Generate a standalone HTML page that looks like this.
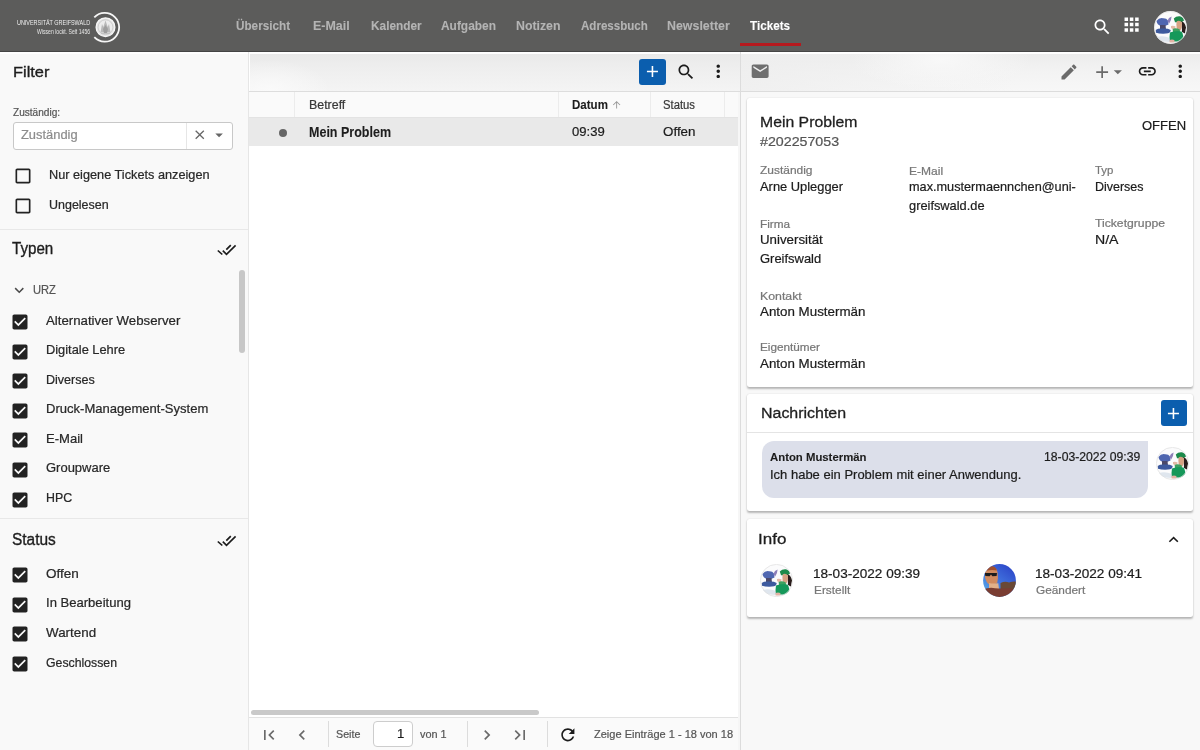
<!DOCTYPE html>
<html><head><meta charset="utf-8">
<style>
*{box-sizing:border-box;margin:0;padding:0}
html,body{width:1200px;height:750px;overflow:hidden;background:#f7f7f7;font-family:"Liberation Sans",sans-serif}
.a{position:absolute}
.t{position:absolute;white-space:nowrap}
</style></head><body>
<svg width="0" height="0" style="position:absolute"><defs><filter id="blr" x="-10%" y="-10%" width="120%" height="120%"><feGaussianBlur stdDeviation="0.45"/></filter><clipPath id="cav"><circle cx="16.5" cy="16.5" r="16.4"/></clipPath>
<linearGradient id="sky" x1="0.8" y1="0" x2="0.1" y2="0.9"><stop offset="0" stop-color="#2c45c8"/><stop offset="0.5" stop-color="#3f6fdc"/><stop offset="1" stop-color="#58a8e6"/></linearGradient></defs></svg>
<div class="a" style="left:0px;top:0px;width:1200px;height:51px;background:#5c5c5b;"></div>
<div class="a" style="left:0px;top:51px;width:1200px;height:1px;background:#454545;"></div>
<div class="a" style="left:0px;top:52px;width:248px;height:698px;background:#f9f9f9;"></div>
<div class="a" style="left:248px;top:52px;width:2px;height:698px;background:#e6e6e6;"></div>
<div class="a" style="left:249px;top:52px;width:491px;height:698px;background:#ffffff;"></div>
<div class="a" style="left:740px;top:52px;width:1px;height:698px;background:#dcdcdc;"></div>
<div class="a" style="left:741px;top:52px;width:459px;height:698px;background:#f8f8f8;"></div>
<svg class="a" style="left:90px;top:10px" width="35" height="35" viewBox="0 0 35 35"><path d="M4.3 7.4 A14.4 14.4 0 1 1 4.3 27.2" fill="none" stroke="#f6f6f6" stroke-width="1.8"/><circle cx="15.5" cy="17.2" r="9.4" fill="#e6e6e6" stroke="#f7f7f7" stroke-width="1.3"/><circle cx="15.5" cy="17.2" r="7.4" fill="#ececec" stroke="#bcbcbc" stroke-width="0.6"/><path d="M10.5 22.5 L12 14 L13.3 17 L15.5 10.5 L17.7 17 L19 14 L20.5 22.5Z" fill="#b9b9b9"/><path d="M13 19 L15.5 15 L18 19 L17 23 L14 23Z" fill="#9e9e9e"/><path d="M11 23.5 H20" stroke="#c2c2c2" stroke-width="1"/></svg>
<div class="a" style="left:740px;top:43px;width:61px;height:3px;background:#b5191e;"></div>
<svg class="a" style="left:1091.5px;top:17.2px" width="20.3" height="20.3" viewBox="0 0 24 24"><path d="M15.5 14h-.79l-.28-.27C15.41 12.590 16 11.11 16 9.5 16 5.91 13.09 3 9.5 3S3 5.91 3 9.5 5.91 16 9.5 16c1.61 0 3.09-.59 4.23-1.57l.27.28v.79l5 4.99L20.49 19l-4.99-5zm-6 0C7.01 14 5 11.99 5 9.5S7.01 5 9.5 5 14 7.01 14 9.5 11.99 14 9.5 14z" fill="#ffffff"/></svg>
<svg class="a" style="left:1120.5px;top:14.2px" width="21.2" height="21.2" viewBox="0 0 24 24"><path d="M4 8h4V4H4v4zm6 12h4v-4h-4v4zm-6 0h4v-4H4v4zm0-6h4v-4H4v4zm6 0h4v-4h-4v4zm6-10v4h4V4h-4zm-6 4h4V4h-4v4zm6 6h4v-4h-4v4zm0 6h4v-4h-4v4z" fill="#ffffff"/></svg>
<div class="a" style="left:1154px;top:11px;width:33px;height:33px"><svg width="33" height="33" viewBox="0 0 33 33"><g clip-path="url(#cav)"><rect width="33" height="33" fill="#fbfbfc"/><g filter="url(#blr)">
<path d="M3 26 Q9 24 16 27 L16 31 Q9 31 3 29Z" fill="#dfe6ee"/>
<path d="M2.5 10 Q5 6.5 9 7.2 Q12.5 7 14 9.5 L14.5 13.5 Q11 15.5 7 15 Q3 14 2.5 10Z" fill="#4f66b0"/>
<path d="M13.3 10 Q14.5 6.5 17.6 5.6 Q17.4 9.5 15.2 12.6Z" fill="#8d7fb8"/>
<path d="M6 14 L11.5 14 L12 18.5 L6 18.5Z" fill="#4b4a6a"/>
<path d="M1.7 19 Q4 17.2 9 17.6 Q14 17.4 16.7 19 Q16.5 22.6 12 22.6 Q6 23 2 21.8Z" fill="#3c5a9e"/>
<path d="M19.8 7.5 Q22 4.8 26 5.2 Q29.5 6.2 30 9.5 L27 11.5 L21 11.2Z" fill="#1f8a4c"/>
<path d="M27.5 10 Q31.5 12 32 16.5 L31 22.5 L28 21Z" fill="#2a1f1a"/>
<path d="M22.8 10.2 Q26 9 28 11.5 Q28.4 16.5 26.5 19.5 Q24 20 22.6 17 Q22 13 22.8 10.2Z" fill="#d7a283"/>
<path d="M17 15 Q19.5 14.2 21.6 15.6 L21 18.3 Q18.5 18.6 17 17Z" fill="#e3b9a6"/>
<path d="M18.6 18 Q22 16.2 25.8 18.6 L26 21 L19 21Z" fill="#3da05e"/>
<path d="M16 21.5 Q21 19.5 27.5 20.5 Q30 24 29 30.5 L16 30.5 Q15 26 16 21.5Z" fill="#12985a"/>
<path d="M15.6 29 Q18 28.2 20.4 29 L20.4 31.5 L15.6 31.5Z" fill="#e2b2a4"/>
</g></g><circle cx="16.5" cy="16.5" r="16.1" fill="none" stroke="#e0e0e0" stroke-width="0.7"/></svg></div>
<div class="a" style="left:13px;top:122px;width:220px;height:28px;background:#fff;border:1px solid #c8c8c8;border-radius:3px"></div>
<div class="a" style="left:186px;top:123px;width:1px;height:26px;background:#e6e6e6;"></div>
<svg class="a" style="left:191.85px;top:127.25px" width="15.5" height="15.5" viewBox="0 0 24 24"><path d="M19 6.41L17.590 5 12 10.59 6.41 5 5 6.41 10.59 12 5 17.59 6.41 19 12 13.410 17.59 19 19 17.59 13.41 12z" fill="#666"/></svg>
<svg class="a" style="left:210.3px;top:126.4px" width="18.2" height="18.2" viewBox="0 0 24 24"><path d="M7 10l5 5 5-5z" fill="#666"/></svg>
<svg class="a" style="left:12.7px;top:165.9px" width="20" height="20" viewBox="0 0 24 24"><path d="M19 5v14H5V5h14m0-2H5c-1.1 0-2 .9-2 2v14c0 1.1.9 2 2 2h14c1.1 0 2-.9 2-2V5c0-1.1-.9-2-2-2z" fill="#222"/></svg>
<svg class="a" style="left:12.7px;top:195.8px" width="20" height="20" viewBox="0 0 24 24"><path d="M19 5v14H5V5h14m0-2H5c-1.1 0-2 .9-2 2v14c0 1.1.9 2 2 2h14c1.1 0 2-.9 2-2V5c0-1.1-.9-2-2-2z" fill="#222"/></svg>
<div class="a" style="left:0px;top:229px;width:248px;height:1px;background:#e8e8e8;"></div>
<svg class="a" style="left:217px;top:244px" width="20" height="12" viewBox="0 0 20 12"><path d="M0.8 6.5 L5.3 10.5 M5.8 6.6 L9.5 10.3 L18.6 1.4 M9.3 5.7 L13.8 1.2" fill="none" stroke="#1c1c1c" stroke-width="1.65"/></svg>
<div class="a" style="left:239px;top:270px;width:6px;height:83px;background:#c7c7c7;border-radius:3px"></div>
<svg class="a" style="left:10.4px;top:280.9px" width="18.5" height="18.5" viewBox="0 0 24 24"><path d="M16.59 8.59L12 13.17 7.41 8.59 6 10l6 6 6-6z" fill="#4a4a4a"/></svg>
<svg class="a" style="left:9.7px;top:312.0px" width="20" height="20" viewBox="0 0 24 24"><path d="M19 3H5c-1.11 0-2 .9-2 2v14c0 1.1.89 2 2 2h14c1.11 0 2-.9 2-2V5c0-1.1-.89-2-2-2zm-9 14l-5-5 1.41-1.41L10 14.17l7.59-7.590L19 8l-9 9z" fill="#222"/></svg>
<svg class="a" style="left:9.7px;top:341.6px" width="20" height="20" viewBox="0 0 24 24"><path d="M19 3H5c-1.11 0-2 .9-2 2v14c0 1.1.89 2 2 2h14c1.11 0 2-.9 2-2V5c0-1.1-.89-2-2-2zm-9 14l-5-5 1.41-1.41L10 14.17l7.59-7.590L19 8l-9 9z" fill="#222"/></svg>
<svg class="a" style="left:9.7px;top:371.2px" width="20" height="20" viewBox="0 0 24 24"><path d="M19 3H5c-1.11 0-2 .9-2 2v14c0 1.1.89 2 2 2h14c1.11 0 2-.9 2-2V5c0-1.1-.89-2-2-2zm-9 14l-5-5 1.41-1.41L10 14.17l7.59-7.590L19 8l-9 9z" fill="#222"/></svg>
<svg class="a" style="left:9.7px;top:400.8px" width="20" height="20" viewBox="0 0 24 24"><path d="M19 3H5c-1.11 0-2 .9-2 2v14c0 1.1.89 2 2 2h14c1.11 0 2-.9 2-2V5c0-1.1-.89-2-2-2zm-9 14l-5-5 1.41-1.41L10 14.17l7.59-7.590L19 8l-9 9z" fill="#222"/></svg>
<svg class="a" style="left:9.7px;top:430.4px" width="20" height="20" viewBox="0 0 24 24"><path d="M19 3H5c-1.11 0-2 .9-2 2v14c0 1.1.89 2 2 2h14c1.11 0 2-.9 2-2V5c0-1.1-.89-2-2-2zm-9 14l-5-5 1.41-1.41L10 14.17l7.59-7.590L19 8l-9 9z" fill="#222"/></svg>
<svg class="a" style="left:9.7px;top:460.0px" width="20" height="20" viewBox="0 0 24 24"><path d="M19 3H5c-1.11 0-2 .9-2 2v14c0 1.1.89 2 2 2h14c1.11 0 2-.9 2-2V5c0-1.1-.89-2-2-2zm-9 14l-5-5 1.41-1.41L10 14.17l7.59-7.590L19 8l-9 9z" fill="#222"/></svg>
<svg class="a" style="left:9.7px;top:489.6px" width="20" height="20" viewBox="0 0 24 24"><path d="M19 3H5c-1.11 0-2 .9-2 2v14c0 1.1.89 2 2 2h14c1.11 0 2-.9 2-2V5c0-1.1-.89-2-2-2zm-9 14l-5-5 1.41-1.41L10 14.17l7.59-7.590L19 8l-9 9z" fill="#222"/></svg>
<div class="a" style="left:0px;top:518px;width:248px;height:1px;background:#e8e8e8;"></div>
<svg class="a" style="left:217px;top:535px" width="20" height="12" viewBox="0 0 20 12"><path d="M0.8 6.5 L5.3 10.5 M5.8 6.6 L9.5 10.3 L18.6 1.4 M9.3 5.7 L13.8 1.2" fill="none" stroke="#1c1c1c" stroke-width="1.65"/></svg>
<svg class="a" style="left:9.7px;top:564.9px" width="20" height="20" viewBox="0 0 24 24"><path d="M19 3H5c-1.11 0-2 .9-2 2v14c0 1.1.89 2 2 2h14c1.11 0 2-.9 2-2V5c0-1.1-.89-2-2-2zm-9 14l-5-5 1.41-1.41L10 14.17l7.59-7.590L19 8l-9 9z" fill="#222"/></svg>
<svg class="a" style="left:9.7px;top:594.6px" width="20" height="20" viewBox="0 0 24 24"><path d="M19 3H5c-1.11 0-2 .9-2 2v14c0 1.1.89 2 2 2h14c1.11 0 2-.9 2-2V5c0-1.1-.89-2-2-2zm-9 14l-5-5 1.41-1.41L10 14.17l7.59-7.590L19 8l-9 9z" fill="#222"/></svg>
<svg class="a" style="left:9.7px;top:624.3px" width="20" height="20" viewBox="0 0 24 24"><path d="M19 3H5c-1.11 0-2 .9-2 2v14c0 1.1.89 2 2 2h14c1.11 0 2-.9 2-2V5c0-1.1-.89-2-2-2zm-9 14l-5-5 1.41-1.41L10 14.17l7.59-7.590L19 8l-9 9z" fill="#222"/></svg>
<svg class="a" style="left:9.7px;top:654.0px" width="20" height="20" viewBox="0 0 24 24"><path d="M19 3H5c-1.11 0-2 .9-2 2v14c0 1.1.89 2 2 2h14c1.11 0 2-.9 2-2V5c0-1.1-.89-2-2-2zm-9 14l-5-5 1.41-1.41L10 14.17l7.59-7.590L19 8l-9 9z" fill="#222"/></svg>
<div class="a" style="left:250px;top:52px;width:490px;height:39px;background:radial-gradient(ellipse 60px 30px at 20px 38px,#fafafa,rgba(250,250,250,0)),linear-gradient(180deg,#e9e9e9 0%,#eeeeee 40%,#f4f4f4 100%)"></div>
<div class="a" style="left:249px;top:91px;width:491px;height:1px;background:#dddddd;"></div>
<div class="a" style="left:639.4px;top:58.9px;width:26.2px;height:26px;background:#0b5eae;border-radius:3px"></div>
<svg class="a" style="left:643.4px;top:62.4px" width="18.9" height="18.9" viewBox="0 0 24 24"><path d="M19 13h-6v6h-2v-6H5v-2h6V5h2v6h6v2z" fill="#ffffff"/></svg>
<svg class="a" style="left:675.5px;top:61.75px" width="20" height="20" viewBox="0 0 24 24"><path d="M15.5 14h-.79l-.28-.27C15.41 12.590 16 11.11 16 9.5 16 5.91 13.09 3 9.5 3S3 5.91 3 9.5 5.91 16 9.5 16c1.61 0 3.09-.59 4.23-1.57l.27.28v.79l5 4.99L20.49 19l-4.99-5zm-6 0C7.01 14 5 11.99 5 9.5S7.01 5 9.5 5 14 7.01 14 9.5 11.99 14 9.5 14z" fill="#1c1c1c"/></svg>
<svg class="a" style="left:707.75px;top:61.3px" width="20.5" height="20.5" viewBox="0 0 24 24"><path d="M12 8c1.1 0 2-.9 2-2s-.9-2-2-2-2 .9-2 2 .9 2 2 2zm0 2c-1.1 0-2 .9-2 2s.9 2 2 2 2-.9 2-2-.9-2-2-2zm0 6c-1.1 0-2 .9-2 2s.9 2 2 2 2-.9 2-2-.9-2-2-2z" fill="#1c1c1c"/></svg>
<div class="a" style="left:249px;top:92px;width:489px;height:25px;background:#fafafa;"></div>
<div class="a" style="left:249px;top:117px;width:489px;height:1px;background:#e3e3e3;"></div>
<div class="a" style="left:294px;top:92px;width:1px;height:25px;background:#ececec;"></div>
<div class="a" style="left:557.5px;top:92px;width:1px;height:25px;background:#ececec;"></div>
<div class="a" style="left:649.5px;top:92px;width:1px;height:25px;background:#ececec;"></div>
<div class="a" style="left:724px;top:92px;width:1px;height:25px;background:#ececec;"></div>
<svg class="a" style="left:611.3px;top:99.4px" width="11.25" height="11.25" viewBox="0 0 24 24"><path d="M4 12l1.41 1.41L11 7.83V20h2V7.830l5.58 5.59L20 12l-8-8-8 8z" fill="#9a9a9a"/></svg>
<div class="a" style="left:249px;top:118px;width:489px;height:27.6px;background:#e9e9e9;"></div>
<div class="a" style="left:278.5px;top:128.6px;width:8.5px;height:8.5px;border-radius:50%;background:#666"></div>
<div class="a" style="left:251px;top:710px;width:288px;height:5px;background:#c9c9c9;border-radius:3px"></div>
<div class="a" style="left:249px;top:717px;width:489px;height:1px;background:#e2e2e2;"></div>
<div class="a" style="left:249px;top:718px;width:489px;height:32px;background:#fafafa;"></div>
<svg class="a" style="left:259.3px;top:724.8px" width="20" height="20" viewBox="0 0 24 24"><path d="M18.41 16.59L13.82 12l4.59-4.59L17 6l-6 6 6 6zM6 6h2v12H6z" fill="#6a6a6a"/></svg>
<svg class="a" style="left:291.5px;top:724.8px" width="20" height="20" viewBox="0 0 24 24"><path d="M15.41 7.41L14 6l-6 6 6 6 1.41-1.41L10.83 12z" fill="#6a6a6a"/></svg>
<div class="a" style="left:328px;top:721px;width:1px;height:26px;background:#dcdcdc;"></div>
<div class="a" style="left:373px;top:721px;width:40px;height:26px;background:#fff;border:1px solid #cdcdcd;border-radius:4px"></div>
<div class="a" style="left:467px;top:721px;width:1px;height:26px;background:#dcdcdc;"></div>
<svg class="a" style="left:477.3px;top:724.8px" width="20" height="20" viewBox="0 0 24 24"><path d="M10 6L8.59 7.41 13.17 12l-4.58 4.59L10 18l6-6z" fill="#6a6a6a"/></svg>
<svg class="a" style="left:510px;top:724.8px" width="20" height="20" viewBox="0 0 24 24"><path d="M5.59 7.41L10.18 12l-4.59 4.59L7 18l6-6-6-6zM16 6h2v12h-2z" fill="#6a6a6a"/></svg>
<div class="a" style="left:547px;top:721px;width:1px;height:26px;background:#dcdcdc;"></div>
<svg class="a" style="left:558px;top:724.7px" width="19.7" height="19.7" viewBox="0 0 24 24"><path d="M17.65 6.35C16.2 4.9 14.21 4 12 4c-4.42 0-7.99 3.58-7.99 8s3.57 8 7.99 8c3.73 0 6.84-2.550 7.73-6h-2.08c-.82 2.33-3.04 4-5.650 4-3.31 0-6-2.69-6-6s2.69-6 6-6c1.66 0 3.14.69 4.22 1.78L13 11h7V4l-2.35 2.35z" fill="#1c1c1c"/></svg>
<div class="a" style="left:738px;top:92px;width:2px;height:658px;background:#f6f6f6;"></div>
<div class="a" style="left:741px;top:52px;width:459px;height:39px;background:radial-gradient(ellipse 90px 30px at 200px 8px,#f8f8f8,rgba(248,248,248,0)),linear-gradient(90deg,rgba(238,238,238,0.8) 0%,rgba(246,246,246,0) 60%),linear-gradient(180deg,#ebebeb 0%,#f3f3f3 50%,#f7f7f7 100%)"></div>
<div class="a" style="left:741px;top:91px;width:459px;height:1px;background:#dcdcdc;"></div>
<svg class="a" style="left:750.3px;top:61.4px" width="20.3" height="20.3" viewBox="0 0 24 24"><path d="M20 4H4c-1.1 0-1.99.9-1.99 2L2 18c0 1.1.9 2 2 2h16c1.1 0 2-.9 2-2V6c0-1.1-.9-2-2-2zm0 4l-8 5-8-5V6l8 5 8-5v2z" fill="#6f6f6f"/></svg>
<svg class="a" style="left:1058.8px;top:61.9px" width="20" height="20" viewBox="0 0 24 24"><path d="M3 17.25V21h3.750L17.81 9.94l-3.75-3.75L3 17.25zM20.71 7.04c.39-.39.39-1.02 0-1.41l-2.34-2.34c-.39-.39-1.02-.39-1.41 0l-1.83 1.83 3.75 3.75 1.83-1.83z" fill="#6b6b6b"/></svg>
<svg class="a" style="left:1091.5px;top:61.55px" width="20.3" height="20.3" viewBox="0 0 24 24"><path d="M19 13h-6v6h-2v-6H5v-2h6V5h2v6h6v2z" fill="#6b6b6b"/></svg>
<svg class="a" style="left:1108.2px;top:61.6px" width="19.7" height="19.7" viewBox="0 0 24 24"><path d="M7 10l5 5 5-5z" fill="#6b6b6b"/></svg>
<svg class="a" style="left:1137.3px;top:61.1px" width="20.6" height="20.6" viewBox="0 0 24 24"><path d="M3.9 12c0-1.71 1.39-3.1 3.1-3.1h4V7H7c-2.76 0-5 2.24-5 5s2.24 5 5 5h4v-1.9H7c-1.71 0-3.1-1.39-3.1-3.1zM8 13h8v-2H8v2zm9-6h-4v1.9h4c1.71 0 3.1 1.39 3.1 3.1s-1.39 3.1-3.1 3.1h-4V17h4c2.76 0 5-2.24 5-5s-2.24-5-5-5z" fill="#1c1c1c"/></svg>
<svg class="a" style="left:1170.25px;top:61.3px" width="20.5" height="20.5" viewBox="0 0 24 24"><path d="M12 8c1.1 0 2-.9 2-2s-.9-2-2-2-2 .9-2 2 .9 2 2 2zm0 2c-1.1 0-2 .9-2 2s.9 2 2 2 2-.9 2-2-.9-2-2-2zm0 6c-1.1 0-2 .9-2 2s.9 2 2 2 2-.9 2-2-.9-2-2-2z" fill="#1c1c1c"/></svg>
<div class="a" style="left:747px;top:98px;width:446px;height:289px;background:#fff;border-radius:2.5px;box-shadow:0 1.2px 2px rgba(0,0,0,0.26),0 0 2px rgba(0,0,0,0.07)"></div>
<div class="a" style="left:747px;top:394px;width:446px;height:117px;background:#fff;border-radius:2.5px;box-shadow:0 1.2px 2px rgba(0,0,0,0.26),0 0 2px rgba(0,0,0,0.07)"></div>
<div class="a" style="left:747px;top:432px;width:446px;height:1px;background:#e4e4e4;"></div>
<div class="a" style="left:1161px;top:400px;width:26px;height:26px;background:#0b5eae;border-radius:3px"></div>
<svg class="a" style="left:1164.4px;top:403.8px" width="18.9" height="18.9" viewBox="0 0 24 24"><path d="M19 13h-6v6h-2v-6H5v-2h6V5h2v6h6v2z" fill="#ffffff"/></svg>
<div class="a" style="left:762px;top:441px;width:386px;height:57px;background:#dcdfea;border-radius:12px 0 12px 12px"></div>
<div class="a" style="left:1156px;top:447px;width:33px;height:33px"><svg width="33" height="33" viewBox="0 0 33 33"><g clip-path="url(#cav)"><rect width="33" height="33" fill="#fbfbfc"/><g filter="url(#blr)">
<path d="M3 26 Q9 24 16 27 L16 31 Q9 31 3 29Z" fill="#dfe6ee"/>
<path d="M2.5 10 Q5 6.5 9 7.2 Q12.5 7 14 9.5 L14.5 13.5 Q11 15.5 7 15 Q3 14 2.5 10Z" fill="#4f66b0"/>
<path d="M13.3 10 Q14.5 6.5 17.6 5.6 Q17.4 9.5 15.2 12.6Z" fill="#8d7fb8"/>
<path d="M6 14 L11.5 14 L12 18.5 L6 18.5Z" fill="#4b4a6a"/>
<path d="M1.7 19 Q4 17.2 9 17.6 Q14 17.4 16.7 19 Q16.5 22.6 12 22.6 Q6 23 2 21.8Z" fill="#3c5a9e"/>
<path d="M19.8 7.5 Q22 4.8 26 5.2 Q29.5 6.2 30 9.5 L27 11.5 L21 11.2Z" fill="#1f8a4c"/>
<path d="M27.5 10 Q31.5 12 32 16.5 L31 22.5 L28 21Z" fill="#2a1f1a"/>
<path d="M22.8 10.2 Q26 9 28 11.5 Q28.4 16.5 26.5 19.5 Q24 20 22.6 17 Q22 13 22.8 10.2Z" fill="#d7a283"/>
<path d="M17 15 Q19.5 14.2 21.6 15.6 L21 18.3 Q18.5 18.6 17 17Z" fill="#e3b9a6"/>
<path d="M18.6 18 Q22 16.2 25.8 18.6 L26 21 L19 21Z" fill="#3da05e"/>
<path d="M16 21.5 Q21 19.5 27.5 20.5 Q30 24 29 30.5 L16 30.5 Q15 26 16 21.5Z" fill="#12985a"/>
<path d="M15.6 29 Q18 28.2 20.4 29 L20.4 31.5 L15.6 31.5Z" fill="#e2b2a4"/>
</g></g><circle cx="16.5" cy="16.5" r="16.1" fill="none" stroke="#e0e0e0" stroke-width="0.7"/></svg></div>
<div class="a" style="left:747px;top:519px;width:446px;height:98px;background:#fff;border-radius:2.5px;box-shadow:0 1.2px 2px rgba(0,0,0,0.26),0 0 2px rgba(0,0,0,0.07)"></div>
<svg class="a" style="left:1164.2px;top:529.7px" width="19.2" height="19.2" viewBox="0 0 24 24"><path d="M12 8l-6 6 1.41 1.41L12 10.83l4.59 4.58L18 14z" fill="#1c1c1c"/></svg>
<div class="a" style="left:760px;top:564px;width:33px;height:33px"><svg width="33" height="33" viewBox="0 0 33 33"><g clip-path="url(#cav)"><rect width="33" height="33" fill="#fbfbfc"/><g filter="url(#blr)">
<path d="M3 26 Q9 24 16 27 L16 31 Q9 31 3 29Z" fill="#dfe6ee"/>
<path d="M2.5 10 Q5 6.5 9 7.2 Q12.5 7 14 9.5 L14.5 13.5 Q11 15.5 7 15 Q3 14 2.5 10Z" fill="#4f66b0"/>
<path d="M13.3 10 Q14.5 6.5 17.6 5.6 Q17.4 9.5 15.2 12.6Z" fill="#8d7fb8"/>
<path d="M6 14 L11.5 14 L12 18.5 L6 18.5Z" fill="#4b4a6a"/>
<path d="M1.7 19 Q4 17.2 9 17.6 Q14 17.4 16.7 19 Q16.5 22.6 12 22.6 Q6 23 2 21.8Z" fill="#3c5a9e"/>
<path d="M19.8 7.5 Q22 4.8 26 5.2 Q29.5 6.2 30 9.5 L27 11.5 L21 11.2Z" fill="#1f8a4c"/>
<path d="M27.5 10 Q31.5 12 32 16.5 L31 22.5 L28 21Z" fill="#2a1f1a"/>
<path d="M22.8 10.2 Q26 9 28 11.5 Q28.4 16.5 26.5 19.5 Q24 20 22.6 17 Q22 13 22.8 10.2Z" fill="#d7a283"/>
<path d="M17 15 Q19.5 14.2 21.6 15.6 L21 18.3 Q18.5 18.6 17 17Z" fill="#e3b9a6"/>
<path d="M18.6 18 Q22 16.2 25.8 18.6 L26 21 L19 21Z" fill="#3da05e"/>
<path d="M16 21.5 Q21 19.5 27.5 20.5 Q30 24 29 30.5 L16 30.5 Q15 26 16 21.5Z" fill="#12985a"/>
<path d="M15.6 29 Q18 28.2 20.4 29 L20.4 31.5 L15.6 31.5Z" fill="#e2b2a4"/>
</g></g><circle cx="16.5" cy="16.5" r="16.1" fill="none" stroke="#e0e0e0" stroke-width="0.7"/></svg></div>
<div class="a" style="left:983px;top:564px;width:33px;height:33px"><svg width="33" height="33" viewBox="0 0 33 33"><g clip-path="url(#cav)"><rect width="33" height="33" fill="url(#sky)"/><g filter="url(#blr)">
<path d="M17.5 19 Q22 17 26 18.5 Q30 17 33 17.5 L33 28 L17.5 28Z" fill="#6a4a36"/>
<path d="M2 9 Q3 3.5 8.5 3 Q13.5 3 14.5 8 Q15.5 14 14.2 19 Q11.5 21.5 7 21 Q2.5 18 2 13Z" fill="#d08a5e"/>
<path d="M3.2 6.8 Q5 2.2 9 2.2 Q13 2.4 14 6.6 Q9 5.2 3.2 6.8Z" fill="#a0502e"/>
<path d="M1.6 9 L14 9 L13.6 12 L9.4 12.2 L8 10.6 L6.6 12.2 L2.4 12Z" fill="#1d1d1f"/>
<path d="M6 19 Q10 20 15.3 19.3 L16 25 L6 25Z" fill="#e2b08a"/>
<path d="M0 25.5 Q6 23 12 24.2 Q20 25 26 24 Q31 25 33 27 L33 33 L0 33Z" fill="#7a3c30"/>
</g></g></svg></div>
<div class="a" style="left:0px;top:52px;width:248px;height:1.5px;background:#ffffff;"></div>
<div class="a" style="left:250px;top:52px;width:490px;height:1.5px;background:#ffffff;"></div>
<div class="a" style="left:741px;top:52px;width:459px;height:1.5px;background:#ffffff;"></div>
<div class="t" style="left:16.80px;top:19.47px;font-size:7.8px;line-height:7.8px;font-weight:normal;color:#efefef;transform:scaleX(0.6971);transform-origin:0 0">UNIVERSITÄT GREIFSWALD</div>
<div class="t" style="left:36.80px;top:27.61px;font-size:7.4px;line-height:7.4px;font-weight:normal;color:#e8e8e8;transform:scaleX(0.6909);transform-origin:0 0">Wissen lockt. Seit 1456</div>
<div class="t" style="left:236.30px;top:18.95px;font-size:13px;line-height:13px;font-weight:bold;color:#b4b4b4;transform:scaleX(0.9016);transform-origin:0 0;-webkit-text-stroke:0.1px #b4b4b4">Übersicht</div>
<div class="t" style="left:312.80px;top:18.95px;font-size:13px;line-height:13px;font-weight:bold;color:#b4b4b4;transform:scaleX(0.9579);transform-origin:0 0;-webkit-text-stroke:0.1px #b4b4b4">E-Mail</div>
<div class="t" style="left:370.80px;top:18.95px;font-size:13px;line-height:13px;font-weight:bold;color:#b4b4b4;transform:scaleX(0.9107);transform-origin:0 0;-webkit-text-stroke:0.1px #b4b4b4">Kalender</div>
<div class="t" style="left:441.30px;top:18.95px;font-size:13px;line-height:13px;font-weight:bold;color:#b4b4b4;transform:scaleX(0.9167);transform-origin:0 0;-webkit-text-stroke:0.1px #b4b4b4">Aufgaben</div>
<div class="t" style="left:516.30px;top:18.95px;font-size:13px;line-height:13px;font-weight:bold;color:#b4b4b4;transform:scaleX(0.9468);transform-origin:0 0;-webkit-text-stroke:0.1px #b4b4b4">Notizen</div>
<div class="t" style="left:580.50px;top:18.95px;font-size:13px;line-height:13px;font-weight:bold;color:#b4b4b4;transform:scaleX(0.8893);transform-origin:0 0;-webkit-text-stroke:0.1px #b4b4b4">Adressbuch</div>
<div class="t" style="left:667.00px;top:18.95px;font-size:13px;line-height:13px;font-weight:bold;color:#b4b4b4;transform:scaleX(0.9545);transform-origin:0 0;-webkit-text-stroke:0.1px #b4b4b4">Newsletter</div>
<div class="t" style="left:750.30px;top:18.95px;font-size:13px;line-height:13px;font-weight:bold;color:#ffffff;transform:scaleX(0.9000);transform-origin:0 0;-webkit-text-stroke:0.1px #ffffff">Tickets</div>
<div class="t" style="left:13.30px;top:63.83px;font-size:15.5px;line-height:15.5px;font-weight:normal;color:#1e1e1e;transform:scaleX(1.0571);transform-origin:0 0;-webkit-text-stroke:0.35px #1e1e1e">Filter</div>
<div class="t" style="left:13.30px;top:106.62px;font-size:10.8px;line-height:10.8px;font-weight:normal;color:#555;transform:scaleX(0.9340);transform-origin:0 0;-webkit-text-stroke:0.22px #555">Zuständig:</div>
<div class="t" style="left:20.70px;top:128.99px;font-size:12.6px;line-height:12.6px;font-weight:normal;color:#8c8c8c;transform:scaleX(1.0236);transform-origin:0 0;-webkit-text-stroke:0.22px #8c8c8c">Zuständig</div>
<div class="t" style="left:48.90px;top:168.15px;font-size:13px;line-height:13px;font-weight:normal;color:#282828;transform:scaleX(0.9787);transform-origin:0 0;-webkit-text-stroke:0.22px #282828">Nur eigene Tickets anzeigen</div>
<div class="t" style="left:48.90px;top:197.85px;font-size:13px;line-height:13px;font-weight:normal;color:#282828;transform:scaleX(0.9597);transform-origin:0 0;-webkit-text-stroke:0.22px #282828">Ungelesen</div>
<div class="t" style="left:11.80px;top:240.60px;font-size:16px;line-height:16px;font-weight:normal;color:#1e1e1e;transform:scaleX(0.9477);transform-origin:0 0;-webkit-text-stroke:0.35px #1e1e1e">Typen</div>
<div class="t" style="left:33.20px;top:283.89px;font-size:12.6px;line-height:12.6px;font-weight:normal;color:#555;transform:scaleX(0.8846);transform-origin:0 0;-webkit-text-stroke:0.22px #555">URZ</div>
<div class="t" style="left:46.30px;top:314.92px;font-size:12.8px;line-height:12.8px;font-weight:normal;color:#282828;transform:scaleX(1.0338);transform-origin:0 0;-webkit-text-stroke:0.22px #282828">Alternativer Webserver</div>
<div class="t" style="left:46.30px;top:343.82px;font-size:12.8px;line-height:12.8px;font-weight:normal;color:#282828;transform:scaleX(1.0025);transform-origin:0 0;-webkit-text-stroke:0.22px #282828">Digitale Lehre</div>
<div class="t" style="left:46.30px;top:374.22px;font-size:12.8px;line-height:12.8px;font-weight:normal;color:#282828;transform:scaleX(0.9800);transform-origin:0 0;-webkit-text-stroke:0.22px #282828">Diverses</div>
<div class="t" style="left:46.30px;top:403.02px;font-size:12.8px;line-height:12.8px;font-weight:normal;color:#282828;transform:scaleX(1.0189);transform-origin:0 0;-webkit-text-stroke:0.22px #282828">Druck-Management-System</div>
<div class="t" style="left:46.30px;top:432.62px;font-size:12.8px;line-height:12.8px;font-weight:normal;color:#282828;transform:scaleX(1.0194);transform-origin:0 0;-webkit-text-stroke:0.22px #282828">E-Mail</div>
<div class="t" style="left:46.30px;top:462.22px;font-size:12.8px;line-height:12.8px;font-weight:normal;color:#282828;transform:scaleX(1.0143);transform-origin:0 0;-webkit-text-stroke:0.22px #282828">Groupware</div>
<div class="t" style="left:46.30px;top:491.82px;font-size:12.8px;line-height:12.8px;font-weight:normal;color:#282828;transform:scaleX(0.9667);transform-origin:0 0;-webkit-text-stroke:0.22px #282828">HPC</div>
<div class="t" style="left:11.70px;top:532.40px;font-size:16px;line-height:16px;font-weight:normal;color:#1e1e1e;transform:scaleX(0.9644);transform-origin:0 0;-webkit-text-stroke:0.35px #1e1e1e">Status</div>
<div class="t" style="left:46.30px;top:567.52px;font-size:12.8px;line-height:12.8px;font-weight:normal;color:#282828;transform:scaleX(1.0548);transform-origin:0 0;-webkit-text-stroke:0.22px #282828">Offen</div>
<div class="t" style="left:46.30px;top:597.22px;font-size:12.8px;line-height:12.8px;font-weight:normal;color:#282828;transform:scaleX(1.0205);transform-origin:0 0;-webkit-text-stroke:0.22px #282828">In Bearbeitung</div>
<div class="t" style="left:46.30px;top:626.92px;font-size:12.8px;line-height:12.8px;font-weight:normal;color:#282828;transform:scaleX(1.0458);transform-origin:0 0;-webkit-text-stroke:0.22px #282828">Wartend</div>
<div class="t" style="left:46.30px;top:656.62px;font-size:12.8px;line-height:12.8px;font-weight:normal;color:#282828;transform:scaleX(0.9595);transform-origin:0 0;-webkit-text-stroke:0.22px #282828">Geschlossen</div>
<div class="t" style="left:308.80px;top:98.88px;font-size:12.5px;line-height:12.5px;font-weight:normal;color:#383838;transform:scaleX(0.9919);transform-origin:0 0;-webkit-text-stroke:0.22px #383838">Betreff</div>
<div class="t" style="left:571.70px;top:98.88px;font-size:12.5px;line-height:12.5px;font-weight:bold;color:#1c1c1c;transform:scaleX(0.9231);transform-origin:0 0;-webkit-text-stroke:0.1px #1c1c1c">Datum</div>
<div class="t" style="left:663.20px;top:98.88px;font-size:12.5px;line-height:12.5px;font-weight:normal;color:#383838;transform:scaleX(0.9028);transform-origin:0 0;-webkit-text-stroke:0.22px #383838">Status</div>
<div class="t" style="left:308.80px;top:124.90px;font-size:14px;line-height:14px;font-weight:bold;color:#1e1e1e;transform:scaleX(0.8935);transform-origin:0 0;-webkit-text-stroke:0.1px #1e1e1e">Mein Problem</div>
<div class="t" style="left:571.50px;top:125.14px;font-size:13.6px;line-height:13.6px;font-weight:normal;color:#1c1c1c;transform:scaleX(0.9618);transform-origin:0 0;-webkit-text-stroke:0.22px #1c1c1c">09:39</div>
<div class="t" style="left:663.20px;top:125.14px;font-size:13.6px;line-height:13.6px;font-weight:normal;color:#1c1c1c;transform:scaleX(0.9848);transform-origin:0 0;-webkit-text-stroke:0.22px #1c1c1c">Offen</div>
<div class="t" style="left:335.80px;top:728.57px;font-size:11.8px;line-height:11.8px;font-weight:normal;color:#555;transform:scaleX(0.9074);transform-origin:0 0;-webkit-text-stroke:0.22px #555">Seite</div>
<div class="t" style="left:397.43px;top:727.04px;font-size:13.6px;line-height:13.6px;font-weight:normal;color:#1c1c1c;transform:scaleX(0.9667);transform-origin:0 0;-webkit-text-stroke:0.22px #1c1c1c">1</div>
<div class="t" style="left:419.80px;top:728.57px;font-size:11.8px;line-height:11.8px;font-weight:normal;color:#555;transform:scaleX(0.9241);transform-origin:0 0;-webkit-text-stroke:0.22px #555">von 1</div>
<div class="t" style="left:593.80px;top:728.57px;font-size:11.8px;line-height:11.8px;font-weight:normal;color:#555;transform:scaleX(0.9342);transform-origin:0 0;-webkit-text-stroke:0.22px #555">Zeige Einträge 1 - 18 von 18</div>
<div class="t" style="left:760.40px;top:113.53px;font-size:15.5px;line-height:15.5px;font-weight:normal;color:#1e1e1e;transform:scaleX(1.0188);transform-origin:0 0;-webkit-text-stroke:0.3px #1e1e1e">Mein Problem</div>
<div class="t" style="left:759.70px;top:134.83px;font-size:13.5px;line-height:13.5px;font-weight:normal;color:#555;transform:scaleX(1.0533);transform-origin:0 0;-webkit-text-stroke:0.22px #555">#202257053</div>
<div class="t" style="left:1141.50px;top:119.72px;font-size:12.8px;line-height:12.8px;font-weight:normal;color:#1c1c1c;transform:scaleX(1.0163);transform-origin:0 0;-webkit-text-stroke:0.22px #1c1c1c">OFFEN</div>
<div class="t" style="left:760.20px;top:164.91px;font-size:11.4px;line-height:11.4px;font-weight:normal;color:#777;transform:scaleX(1.0500);transform-origin:0 0;-webkit-text-stroke:0.22px #777">Zuständig</div>
<div class="t" style="left:759.90px;top:179.72px;font-size:13.5px;line-height:13.5px;font-weight:normal;color:#1c1c1c;transform:scaleX(0.9540);transform-origin:0 0;-webkit-text-stroke:0.22px #1c1c1c">Arne Uplegger</div>
<div class="t" style="left:909.30px;top:165.71px;font-size:11.4px;line-height:11.4px;font-weight:normal;color:#777;transform:scaleX(1.0562);transform-origin:0 0;-webkit-text-stroke:0.22px #777">E-Mail</div>
<div class="t" style="left:909.00px;top:179.72px;font-size:13.5px;line-height:13.5px;font-weight:normal;color:#1c1c1c;transform:scaleX(0.9407);transform-origin:0 0;-webkit-text-stroke:0.22px #1c1c1c">max.mustermaennchen@uni-</div>
<div class="t" style="left:909.00px;top:199.12px;font-size:13.5px;line-height:13.5px;font-weight:normal;color:#1c1c1c;transform:scaleX(0.9500);transform-origin:0 0;-webkit-text-stroke:0.22px #1c1c1c">greifswald.de</div>
<div class="t" style="left:1095.20px;top:164.91px;font-size:11.4px;line-height:11.4px;font-weight:normal;color:#777;transform:scaleX(1.001);transform-origin:0 0;-webkit-text-stroke:0.22px #777">Typ</div>
<div class="t" style="left:1094.90px;top:179.72px;font-size:13.5px;line-height:13.5px;font-weight:normal;color:#1c1c1c;transform:scaleX(0.9245);transform-origin:0 0;-webkit-text-stroke:0.22px #1c1c1c">Diverses</div>
<div class="t" style="left:760.20px;top:218.51px;font-size:11.4px;line-height:11.4px;font-weight:normal;color:#777;transform:scaleX(1.0345);transform-origin:0 0;-webkit-text-stroke:0.22px #777">Firma</div>
<div class="t" style="left:759.90px;top:232.72px;font-size:13.5px;line-height:13.5px;font-weight:normal;color:#1c1c1c;transform:scaleX(0.9844);transform-origin:0 0;-webkit-text-stroke:0.22px #1c1c1c">Universität</div>
<div class="t" style="left:759.90px;top:251.63px;font-size:13.5px;line-height:13.5px;font-weight:normal;color:#1c1c1c;transform:scaleX(0.9594);transform-origin:0 0;-webkit-text-stroke:0.22px #1c1c1c">Greifswald</div>
<div class="t" style="left:1095.20px;top:217.71px;font-size:11.4px;line-height:11.4px;font-weight:normal;color:#777;transform:scaleX(1.0692);transform-origin:0 0;-webkit-text-stroke:0.22px #777">Ticketgruppe</div>
<div class="t" style="left:1094.90px;top:232.72px;font-size:13.5px;line-height:13.5px;font-weight:normal;color:#1c1c1c;transform:scaleX(1.0435);transform-origin:0 0;-webkit-text-stroke:0.22px #1c1c1c">N/A</div>
<div class="t" style="left:760.40px;top:290.51px;font-size:11.4px;line-height:11.4px;font-weight:normal;color:#777;transform:scaleX(1.0821);transform-origin:0 0;-webkit-text-stroke:0.22px #777">Kontakt</div>
<div class="t" style="left:760.10px;top:304.52px;font-size:13.5px;line-height:13.5px;font-weight:normal;color:#1c1c1c;transform:scaleX(0.9887);transform-origin:0 0;-webkit-text-stroke:0.22px #1c1c1c">Anton Mustermän</div>
<div class="t" style="left:760.40px;top:342.31px;font-size:11.4px;line-height:11.4px;font-weight:normal;color:#777;transform:scaleX(1.0305);transform-origin:0 0;-webkit-text-stroke:0.22px #777">Eigentümer</div>
<div class="t" style="left:760.10px;top:356.82px;font-size:13.5px;line-height:13.5px;font-weight:normal;color:#1c1c1c;transform:scaleX(0.9887);transform-origin:0 0;-webkit-text-stroke:0.22px #1c1c1c">Anton Mustermän</div>
<div class="t" style="left:761.00px;top:405.22px;font-size:15.5px;line-height:15.5px;font-weight:normal;color:#1e1e1e;transform:scaleX(1.0289);transform-origin:0 0;-webkit-text-stroke:0.3px #1e1e1e">Nachrichten</div>
<div class="t" style="left:770.00px;top:451.77px;font-size:11.8px;line-height:11.8px;font-weight:bold;color:#1c1c1c;transform:scaleX(0.9620);transform-origin:0 0;-webkit-text-stroke:0.1px #1c1c1c">Anton Mustermän</div>
<div class="t" style="left:1043.63px;top:451.29px;font-size:12.6px;line-height:12.6px;font-weight:normal;color:#1c1c1c;transform:scaleX(0.9687);transform-origin:0 0;-webkit-text-stroke:0.22px #1c1c1c">18-03-2022 09:39</div>
<div class="t" style="left:770.00px;top:467.71px;font-size:13.4px;line-height:13.4px;font-weight:normal;color:#1c1c1c;transform:scaleX(0.9702);transform-origin:0 0;-webkit-text-stroke:0.22px #1c1c1c">Ich habe ein Problem mit einer Anwendung.</div>
<div class="t" style="left:758.07px;top:530.85px;font-size:15px;line-height:15px;font-weight:normal;color:#1e1e1e;transform:scaleX(1.1333);transform-origin:0 0;-webkit-text-stroke:0.3px #1e1e1e">Info</div>
<div class="t" style="left:812.56px;top:567.35px;font-size:13px;line-height:13px;font-weight:normal;color:#1c1c1c;transform:scaleX(1.0431);transform-origin:0 0;-webkit-text-stroke:0.22px #1c1c1c">18-03-2022 09:39</div>
<div class="t" style="left:813.60px;top:583.94px;font-size:11.6px;line-height:11.6px;font-weight:normal;color:#777;transform:scaleX(1.0222);transform-origin:0 0;-webkit-text-stroke:0.22px #777">Erstellt</div>
<div class="t" style="left:1035.06px;top:567.35px;font-size:13px;line-height:13px;font-weight:normal;color:#1c1c1c;transform:scaleX(1.0431);transform-origin:0 0;-webkit-text-stroke:0.22px #1c1c1c">18-03-2022 09:41</div>
<div class="t" style="left:1036.10px;top:583.94px;font-size:11.6px;line-height:11.6px;font-weight:normal;color:#777;transform:scaleX(1.0204);transform-origin:0 0;-webkit-text-stroke:0.22px #777">Geändert</div>
</body></html>
